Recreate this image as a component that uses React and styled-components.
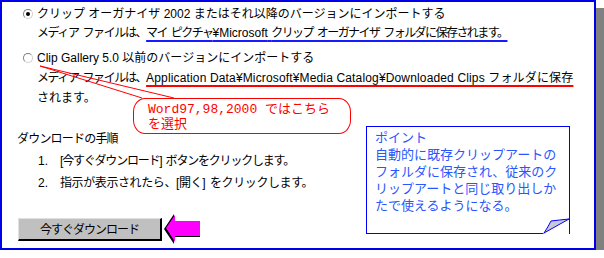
import styled, { createGlobalStyle } from 'styled-components';

const GlobalStyle = createGlobalStyle`
  body {
    margin: 0;
    background: #ffffff;
    font-family: "Liberation Sans", "Noto Sans CJK JP", sans-serif;
  }
`;

const Frame = styled.div`
  position: relative;
  box-sizing: border-box;
  width: 596px;
  height: 250px;
  border: 2px solid #0000e8;
  background: #ffffff;
  box-shadow: 8px 8px 0 #808080;
  font-size: 12px;
  color: #000000;
`;

const Options = styled.div`
  padding: 3px 0 0 21px;
`;

const Option = styled.div`
  display: flex;
  align-items: flex-start;
  gap: 4px;
  & + & {
    margin-top: 5px;
  }
`;

const Radio = styled.span`
  box-sizing: border-box;
  flex: none;
  width: 10px;
  height: 10px;
  margin-top: ${(p) => p.$top}px;
  border-radius: 50%;
  border: 1px solid #808080;
  border-right-color: #d4d0c8;
  border-bottom-color: #d4d0c8;
  background: #ffffff;
  display: flex;
  align-items: center;
  justify-content: center;

  &::after {
    content: '';
    width: 4px;
    height: 4px;
    border-radius: 50%;
    background: ${(p) => (p.$checked ? '#000000' : 'transparent')};
  }
`;

const OptionText = styled.div`
  line-height: ${(p) => p.$lh}px;
`;

// kana in the original UI font run narrower than in Noto, so tighten Japanese runs only
const Squeeze = styled.span`
  letter-spacing: ${(p) => p.$ls}px;
  word-spacing: 2px;
`;

const Marked = styled.span`
  letter-spacing: ${(p) => p.$ls || 0}px;
  text-decoration: underline;
  text-decoration-color: ${(p) => p.$color};
  text-decoration-thickness: 2px;
  text-underline-offset: 3px;
`;

const Lower = styled.div`
  display: flex;
  justify-content: space-between;
  align-items: flex-start;
  margin-top: 18px;
  padding: 0 24px 0 15px;
`;

const Steps = styled.div`
  display: flex;
  flex-direction: column;
`;

const Heading = styled.div`
  line-height: 22px;
  padding-top: 2px;
  letter-spacing: -0.8px;
`;

const StepRow = styled.div`
  display: flex;
  line-height: 22px;
  padding-left: 21px;
  letter-spacing: ${(p) => p.$ls}px;
  word-spacing: 2px;
`;

const StepNo = styled.span`
  width: 22px;
  letter-spacing: 0;
`;

const ButtonRow = styled.div`
  display: flex;
  align-items: center;
  margin-top: 18px;
  padding-left: 1px;
`;

const DownloadButton = styled.button`
  box-sizing: border-box;
  width: 144px;
  height: 23px;
  padding: 0;
  border: 1px solid #e0e0e0;
  border-right: 2px solid #000000;
  border-bottom: 2px solid #000000;
  background: #c0c0c0;
  font-family: "Liberation Sans", "Noto Sans CJK JP", sans-serif;
  font-size: 12px;
  letter-spacing: -1px;
  color: #000000;
`;

const Arrow = styled.svg`
  display: block;
  margin-left: 1px;
`;

const Note = styled.div`
  position: relative;
  box-sizing: border-box;
  width: 204px;
  height: 108px;
  padding: 2px 6px 0 8px;
  border: 1px solid #0000ff;
  background: #ffffff;
  color: #2a55ff;
  font-size: 13px;
  line-height: 17px;
`;

const Fold = styled.svg`
  position: absolute;
  right: -1px;
  bottom: -1px;
  display: block;
`;

const Callout = styled.div`
  position: absolute;
  left: 131px;
  top: 96px;
  box-sizing: border-box;
  width: 218px;
  height: 36px;
  padding: 3px 0 0 14px;
  border: 1px solid #ff0000;
  border-radius: 12px / 14px;
  background: #ffffff;
  color: #ff0000;
  font-family: "Liberation Mono", "Noto Sans CJK JP", monospace;
  font-size: 13px;
  line-height: 15px;
`;

const Tail = styled.svg`
  position: absolute;
  left: 0;
  top: 0;
  pointer-events: none;
`;

export default function App() {
  return (
    <>
      <GlobalStyle />
      <Frame>
        <Options>
          <Option>
            <Radio $checked $top={4} />
            <OptionText $lh={19}>
              クリップ オーガナイザ 2002 またはそれ以降のバージョンにインポートする
              <br />
              <Squeeze $ls={-1.4}>メディア ファイルは、</Squeeze>
              <Marked $color="#1a1aff">
                <Squeeze $ls={-1.55}>マイ ピクチャ</Squeeze>¥Microsoft{' '}
                <Squeeze $ls={-1.55}>クリップ オーガナイザ フォルダに保存されます。</Squeeze>
              </Marked>
            </OptionText>
          </Option>
          <Option>
            <Radio $top={5} />
            <OptionText $lh={20}>
              Clip Gallery 5.0 以前のバージョンにインポートする
              <br />
              <Squeeze $ls={-1.4}>メディア ファイルは、</Squeeze>
              <Marked $color="#ff0000" $ls={0.15}>
                Application Data¥Microsoft¥Media Catalog¥Downloaded Clips フォルダに保存
              </Marked>
              <br />
              されます。
            </OptionText>
          </Option>
        </Options>

        <Lower>
          <Steps>
            <Heading>ダウンロードの手順</Heading>
            <StepRow $ls={-1.2}>
              <StepNo>1.</StepNo>[今すぐダウンロード] ボタンをクリックします。
            </StepRow>
            <StepRow $ls={-0.4}>
              <StepNo>2.</StepNo>指示が表示されたら、[開く] をクリックします。
            </StepRow>
            <ButtonRow>
              <DownloadButton type="button">今すぐダウンロード</DownloadButton>
              <Arrow width="38" height="34" viewBox="0 0 38 34">
                <polygon points="1,17 11,2 11,9 37,9 37,25 11,25 11,32" fill="#000000" />
                <polygon points="3,16 12,3 12,9 37,9 37,24 12,24 12,30" fill="#ff00ff" />
              </Arrow>
            </ButtonRow>
          </Steps>

          <Note>
            ポイント
            <br />
            自動的に既存クリップアートのフォルダに保存され、従来のクリップアートと同じ取り出しかたで使えるようになる。
            <Fold width="27" height="16" viewBox="0 0 27 16">
              <polygon points="1,15 26,1 26,16 0,16" fill="#ffffff" />
              <path d="M1,15 L26,1 Q16,2 8,3 Q5,9 1,15 Z" fill="#c8c8d8" stroke="#0000ff" strokeWidth="1" />
            </Fold>
          </Note>
        </Lower>

        <Tail width="200" height="100" viewBox="0 0 200 100">
          <polyline points="140,96 38,64 172,96" fill="none" stroke="#ff0000" strokeWidth="1" />
        </Tail>
        <Callout>
          Word97,98,2000 ではこちら
          <br />
          を選択
        </Callout>
      </Frame>
    </>
  );
}
